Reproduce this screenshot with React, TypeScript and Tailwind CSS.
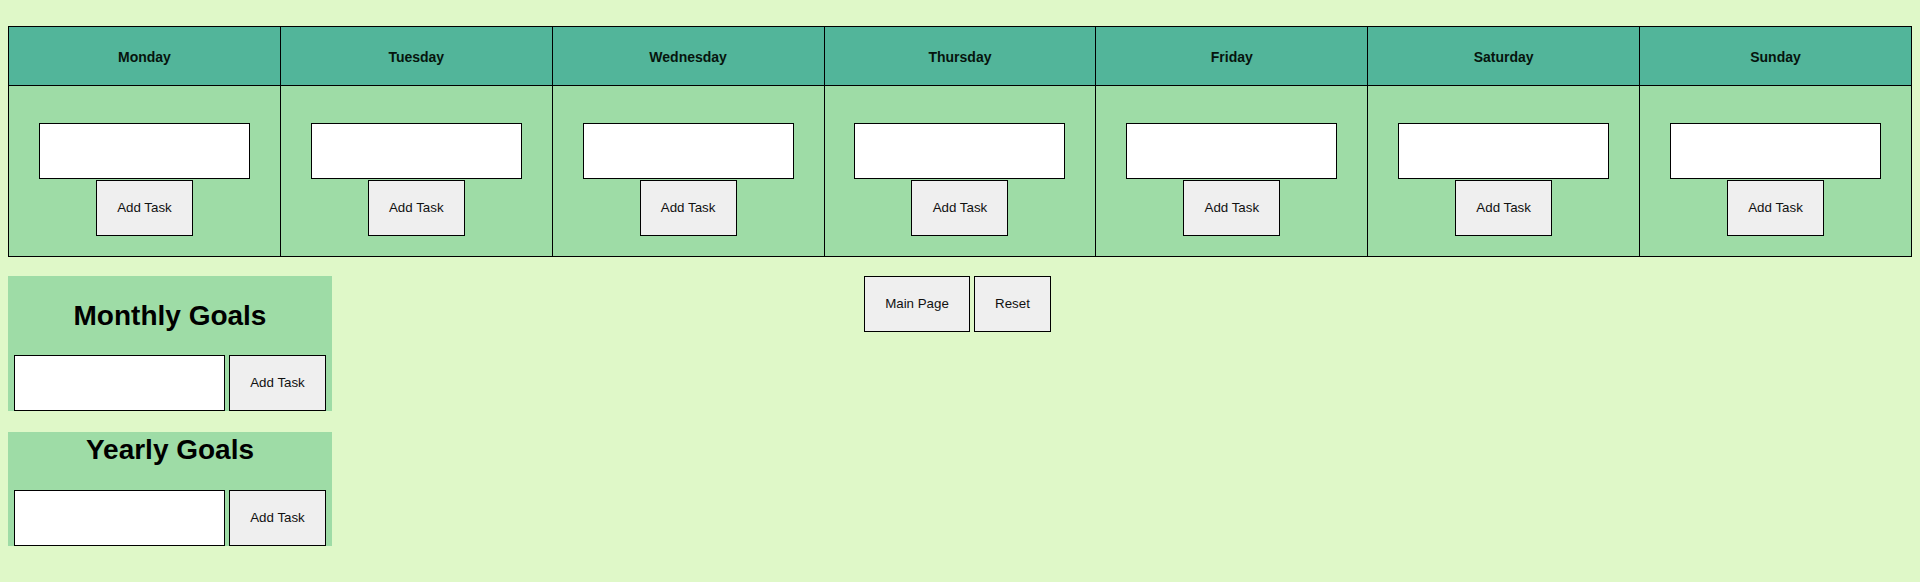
import React from "react";

const days = ["Monday", "Tuesday", "Wednesday", "Thursday", "Friday", "Saturday", "Sunday"];

function Btn({ label, w }: { label: string; w: string }) {
  return (
    <button
      className={`${w} h-[56px] shrink-0 border border-black bg-[#efefef] text-[13.33px] text-[#111] text-center`}
    >
      {label}
    </button>
  );
}

function GoalPanel({ title, top, gap }: { title: string; top: string; gap: string }) {
  return (
    <div className="w-[324px] bg-[#9edca6] px-[6px]">
      <h1 className={`${top} ${gap} text-center text-[28px] leading-[32px] font-bold text-black`}>{title}</h1>
      <div className="flex gap-[4px]">
        <input className="w-[211px] h-[56px] border border-black bg-white" />
        <button className="w-[97px] h-[56px] border border-black bg-[#efefef] text-[13.33px] text-[#111]">
          Add Task
        </button>
      </div>
    </div>
  );
}

export default function App() {
  return (
    <div
      className="min-h-[582px] bg-[#dff8c8] px-[8px] pt-[26px] pb-[8px]"
      style={{ fontFamily: '"Liberation Sans", Arial, sans-serif' }}
    >
      <table className="w-full table-fixed border-collapse">
        <thead>
          <tr>
            {days.map((d) => (
              <th
                key={d}
                className="h-[59px] border border-black bg-[#52b59a] pt-[3px] text-[14px] font-bold text-[#06140d] text-center align-middle"
              >
                {d}
              </th>
            ))}
          </tr>
        </thead>
        <tbody>
          <tr>
            {days.map((d) => (
              <td key={d} className="h-[171px] border border-black bg-[#9edca6] align-top p-0">
                <div className="flex flex-col items-center pt-[37px] gap-[1px]">
                  <input className="w-[211px] h-[56px] border border-black bg-white" />
                  <Btn label="Add Task" w="w-[97px]" />
                </div>
              </td>
            ))}
          </tr>
        </tbody>
      </table>

      <div className="mt-[19px] grid grid-cols-[1fr_auto_1fr] items-start">
        <div className="flex flex-col gap-[21px]">
          <GoalPanel title="Monthly Goals" top="pt-[24px]" gap="mb-[23px]" />
          <GoalPanel title="Yearly Goals" top="pt-[2px]" gap="mb-[24px]" />
        </div>
        <div className="flex gap-[4px] mr-[5px]">
          <Btn label="Main Page" w="w-[106px]" />
          <Btn label="Reset" w="w-[77px]" />
        </div>
        <div />
      </div>
    </div>
  );
}
